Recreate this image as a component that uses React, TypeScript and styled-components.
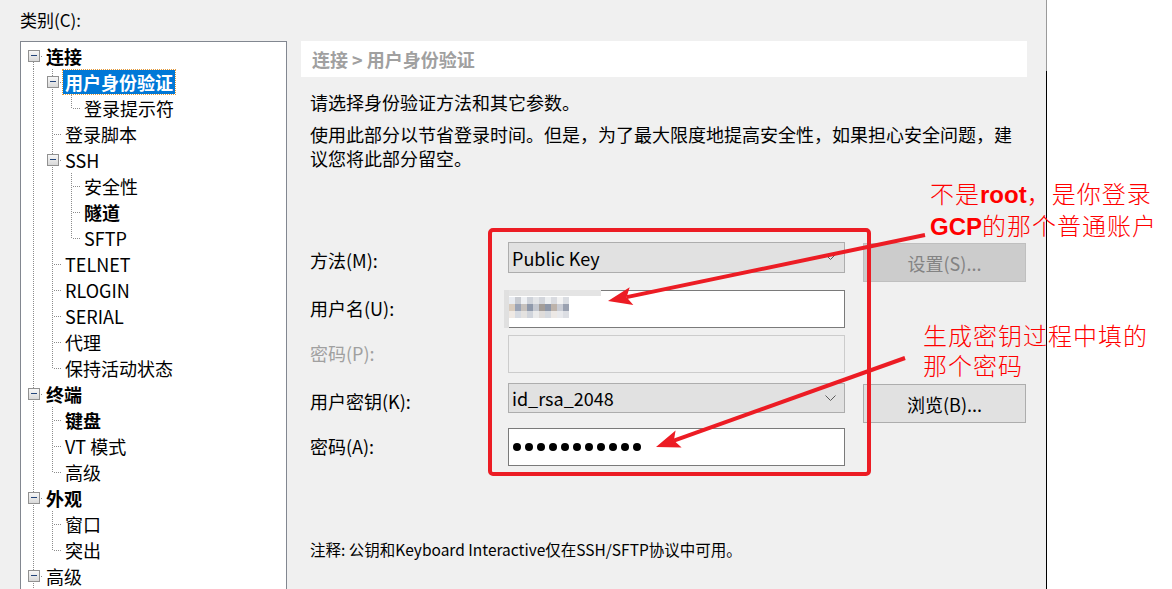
import React from 'react';
import styled, { createGlobalStyle } from 'styled-components';

const GlobalStyle = createGlobalStyle`
	html, body {
		margin: 0;
		padding: 0;
	}
	body {
		width: 1172px;
		height: 589px;
		overflow: hidden;
		background: #fff;
		font-family: "Noto Sans CJK SC", sans-serif;
		color: #000;
	}
`;

const Screen = styled.div`
	position: relative;
	display: flex;
	width: 1172px;
	height: 589px;
	overflow: hidden;
`;

const Dialog = styled.div`
	width: 1046px;
	height: 589px;
	flex-shrink: 0;
	box-sizing: border-box;
	background: #f0f0f0;
	padding: 8px 0 0 20px;
	display: flex;
	flex-direction: column;
`;

const Divider = styled.div`
	width: 1px;
	flex-shrink: 0;
	background: linear-gradient(#9a9a9a 0 71px, #000 71px);
`;

const Outside = styled.div`
	flex: 1;
	background: #fff;
`;

const Caption = styled.div`
	font-size: 17px;
	line-height: 24px;
	margin-bottom: 9px;
`;

const Body = styled.div`
	display: grid;
	grid-template-columns: 267px 726px;
	column-gap: 14px;
	align-items: start;
`;

/* ---------- tree ---------- */

const TreeBox = styled.div`
	height: 560px;
	box-sizing: border-box;
	border: 1px solid #828790;
	background: #fff;
	padding: 1px 0 0 3px;
	overflow: hidden;
`;

const Row = styled.div`
	display: flex;
	align-items: center;
	height: 26px;
`;

const Cell = styled.div`
	position: relative;
	width: 19px;
	height: 26px;
	flex-shrink: 0;
`;

const VLine = styled.div<{ $top: number; $bottom: number }>`
	position: absolute;
	left: 9px;
	top: ${p => p.$top}px;
	bottom: ${p => p.$bottom}px;
	width: 1px;
	background: repeating-linear-gradient(to bottom, #8c8c8c 0 1px, transparent 1px 2px);
`;

const HLine = styled.div`
	position: absolute;
	left: 10px;
	right: 0;
	top: 13px;
	height: 1px;
	background: repeating-linear-gradient(to right, transparent 0 1px, #8c8c8c 1px 2px);
`;

const Expander = styled.div`
	position: absolute;
	left: 4px;
	top: 7px;
	width: 12px;
	height: 12px;
	box-sizing: border-box;
	border: 1px solid #919191;
	background: linear-gradient(#f7f7f7, #d9d9d9);

	&::after {
		content: '';
		position: absolute;
		left: 2px;
		top: 4px;
		width: 6px;
		height: 1px;
		background: #23457a;
	}
`;

const Label = styled.span<{ $bold?: boolean; $selected?: boolean }>`
	margin-left: 1px;
	padding: 0 2px;
	height: 24px;
	line-height: 24px;
	font-size: 18px;
	white-space: nowrap;
	font-weight: ${p => (p.$bold ? 700 : 400)};
	background: ${p => (p.$selected ? '#0078d7' : 'transparent')};
	color: ${p => (p.$selected ? '#fff' : '#000')};
	outline: ${p => (p.$selected ? '1px dotted #e39a3c' : 'none')};
`;

type TreeNode = { label: string; bold?: boolean; selected?: boolean; children?: TreeNode[] };

const tree: TreeNode[] = [
	{
		label: '连接', bold: true, children: [
			{ label: '用户身份验证', bold: true, selected: true, children: [{ label: '登录提示符' }] },
			{ label: '登录脚本' },
			{ label: 'SSH', children: [{ label: '安全性' }, { label: '隧道', bold: true }, { label: 'SFTP' }] },
			{ label: 'TELNET' },
			{ label: 'RLOGIN' },
			{ label: 'SERIAL' },
			{ label: '代理' },
			{ label: '保持活动状态' },
		],
	},
	{ label: '终端', bold: true, children: [{ label: '键盘', bold: true }, { label: 'VT 模式' }, { label: '高级' }] },
	{ label: '外观', bold: true, children: [{ label: '窗口' }, { label: '突出' }] },
	{ label: '高级', children: [{ label: '打印' }] },
	{ label: '文件传输' },
];

type FlatRow = { node: TreeNode; guides: boolean[]; first: boolean; last: boolean };

const flatten = (nodes: TreeNode[], guides: boolean[], root: boolean): FlatRow[] =>
	nodes.flatMap((node, i) => {
		const last = i === nodes.length - 1;
		const row: FlatRow = { node, guides, first: root && i === 0, last };
		return [row, ...(node.children ? flatten(node.children, [...guides, !last], false) : [])];
	});

const Tree = () => (
	<TreeBox>
		{flatten(tree, [], true).map((r, i) => (
			<Row key={i}>
				{r.guides.map((g, j) => (
					<Cell key={j}>{g && <VLine $top={0} $bottom={0} />}</Cell>
				))}
				<Cell>
					<VLine $top={r.first ? 13 : 0} $bottom={r.last ? 13 : 0} />
					<HLine />
					{r.node.children && <Expander />}
				</Cell>
				<Label $bold={r.node.bold} $selected={r.node.selected}>{r.node.label}</Label>
			</Row>
		))}
	</TreeBox>
);

/* ---------- right panel ---------- */

const Panel = styled.div`
	display: flex;
	flex-direction: column;
	font-size: 18px;
`;

const Crumb = styled.div`
	height: 36px;
	line-height: 36px;
	background: #fff;
	color: #a0a0a0;
	font-weight: 700;
	padding-left: 11px;
`;

const Para = styled.p<{ $gap: number }>`
	margin: ${p => p.$gap}px 0 0;
	padding-left: 9px;
	line-height: 24px;
	white-space: nowrap;
`;

const Form = styled.div`
	margin: 72px 0 0 9px;
	display: grid;
	grid-template-columns: 180px 337px 163px;
	grid-template-rows: 48px 45px 48px 45px 38px;
	column-gap: 18px;
	align-items: start;
`;

const FieldLabel = styled.div<{ $disabled?: boolean }>`
	line-height: 36px;
	color: ${p => (p.$disabled ? '#a0a0a0' : '#000')};
`;

const Select = styled.div<{ $h: number }>`
	height: ${p => p.$h}px;
	box-sizing: border-box;
	background: #e1e1e1;
	border: 1px solid #adadad;
	display: flex;
	align-items: center;
	padding: 0 8px 0 3px;
`;

const SelectText = styled.span`
	flex: 1;
`;

const Field = styled.div<{ $disabled?: boolean }>`
	position: relative;
	height: 38px;
	box-sizing: border-box;
	background: ${p => (p.$disabled ? '#f0f0f0' : '#fff')};
	border: 1px solid ${p => (p.$disabled ? '#cccccc' : '#7a7a7a')};
	display: flex;
	align-items: center;
	padding-left: 4px;
`;

const Dots = styled.div`
	display: flex;
	gap: 4px;
`;

const Dot = styled.span`
	width: 8px;
	height: 8px;
	border-radius: 50%;
	background: #000;
`;

const Button = styled.div<{ $disabled?: boolean }>`
	margin-top: 1px;
	height: 39px;
	box-sizing: border-box;
	display: flex;
	align-items: center;
	justify-content: center;
	background: ${p => (p.$disabled ? '#cccccc' : '#e1e1e1')};
	border: 1px solid ${p => (p.$disabled ? '#bfbfbf' : '#adadad')};
	color: ${p => (p.$disabled ? '#838383' : '#000')};
`;

const Mosaic = styled.svg`
	position: absolute;
	left: -5px;
	top: -1px;
`;

const Note = styled.p`
	margin: 71px 0 0 9px;
	font-size: 15.5px;
	line-height: 24px;
	white-space: nowrap;
`;

const Chevron = () => (
	<svg width="11" height="7" viewBox="0 0 11 7">
		<polyline points="0.5,0.5 5.5,5.5 10.5,0.5" fill="none" stroke="#5a5a5a" strokeWidth="1" />
	</svg>
);

const blur = [
	['#e9ecf1', '#c9ccd2', '#eef0f3', '#cfd3da', '#e3e5e8', '#d3d6dc', '#eceef0', '#d9dbe0', '#f2f2f2', '#dadde2'],
	['#d9ccbe', '#9ba4b6', '#c6c1bd', '#8f99ab', '#c3c7cf', '#a39d98', '#8e97a8', '#bdb3ab', '#c9ccd4', '#9aa1b0'],
	['#efe9e4', '#d7dbe2', '#e4e2e0', '#d0d4db', '#ebebeb', '#dfdcda', '#d5d9df', '#ece8e5', '#e8e9ec', '#dcdee3'],
];

const UserMosaic = () => (
	<Mosaic width="100" height="38">
		<rect x="0" y="0" width="97" height="6" fill="#e4e4e4" />
		<rect x="0" y="0" width="5" height="38" fill="#e0e0e0" />
		{blur.map((row, y) =>
			row.map((c, x) => <rect key={`${x}-${y}`} x={5 + x * 6} y={7 + y * 7} width="6" height="7" fill={c} />)
		)}
	</Mosaic>
);

const AuthPanel = () => (
	<Panel>
		<Crumb>连接 &gt; 用户身份验证</Crumb>
		<Para $gap={13}>请选择身份验证方法和其它参数。</Para>
		<Para $gap={8}>
			使用此部分以节省登录时间。但是，为了最大限度地提高安全性，如果担心安全问题，建
			<br />
			议您将此部分留空。
		</Para>
		<Form>
			<FieldLabel>方法(M):</FieldLabel>
			<Select $h={31}>
				<SelectText>Public Key</SelectText>
				<Chevron />
			</Select>
			<Button $disabled>设置(S)...</Button>

			<FieldLabel>用户名(U):</FieldLabel>
			<Field>
				<UserMosaic />
			</Field>
			<span />

			<FieldLabel $disabled>密码(P):</FieldLabel>
			<Field $disabled />
			<span />

			<FieldLabel>用户密钥(K):</FieldLabel>
			<Select $h={30}>
				<SelectText>id_rsa_2048</SelectText>
				<Chevron />
			</Select>
			<Button>浏览(B)...</Button>

			<FieldLabel>密码(A):</FieldLabel>
			<Field>
				<Dots>
					{Array.from({ length: 11 }, (_, i) => <Dot key={i} />)}
				</Dots>
			</Field>
			<span />
		</Form>
		<Note>注释: 公钥和Keyboard Interactive仅在SSH/SFTP协议中可用。</Note>
	</Panel>
);

/* ---------- annotations drawn on top ---------- */

const Overlay = styled.svg`
	position: absolute;
	left: 0;
	top: 0;
	pointer-events: none;
`;

const Callout = styled.div<{ $x: number; $y: number }>`
	position: absolute;
	left: ${p => p.$x}px;
	top: ${p => p.$y}px;
	color: #ff0000;
	font-family: "Noto Sans CJK SC", sans-serif;
	font-weight: 300;
	font-size: 24px;
	line-height: 30px;
	letter-spacing: 1px;
	white-space: nowrap;
`;

const Strong = styled.b`
	font-family: "Liberation Sans", "Noto Sans CJK SC", sans-serif;
	font-weight: 700;
	letter-spacing: 0;
`;

const RED = '#ec1c24';

const Arrow = ({ x1, y1, x2, y2 }: { x1: number; y1: number; x2: number; y2: number }) => {
	const len = Math.hypot(x2 - x1, y2 - y1);
	const ux = (x2 - x1) / len;
	const uy = (y2 - y1) / len;
	const bx = x2 - ux * 24;
	const by = y2 - uy * 24;
	const nx = x2 - ux * 19;
	const ny = y2 - uy * 19;
	const pts = [
		[x2, y2],
		[bx - uy * 9, by + ux * 9],
		[nx, ny],
		[bx + uy * 9, by - ux * 9],
	].map(p => p.join(',')).join(' ');
	return (
		<g>
			<line x1={x1} y1={y1} x2={nx} y2={ny} stroke={RED} strokeWidth="4" />
			<polygon points={pts} fill={RED} />
		</g>
	);
};

const App: React.FC = () => {
	return (
		<Screen>
			<GlobalStyle />
			<Dialog>
				<Caption>类别(C):</Caption>
				<Body>
					<Tree />
					<AuthPanel />
				</Body>
			</Dialog>
			<Divider />
			<Outside />

			<Overlay width="1172" height="589">
				<rect x="490" y="230" width="379" height="244" rx="3" fill="none" stroke={RED} strokeWidth="4" />
				<Arrow x1={925} y1={235} x2={608} y2={301} />
				<Arrow x1={905} y1={358} x2={656} y2={447} />
			</Overlay>
			<Callout $x={930} $y={178}>
				不是<Strong>root</Strong>，是你登录
				<br />
				<Strong>GCP</Strong>的那个普通账户
			</Callout>
			<Callout $x={923} $y={320}>
				生成密钥过程中填的
				<br />
				那个密码
			</Callout>
		</Screen>
	);
};

export default App;
